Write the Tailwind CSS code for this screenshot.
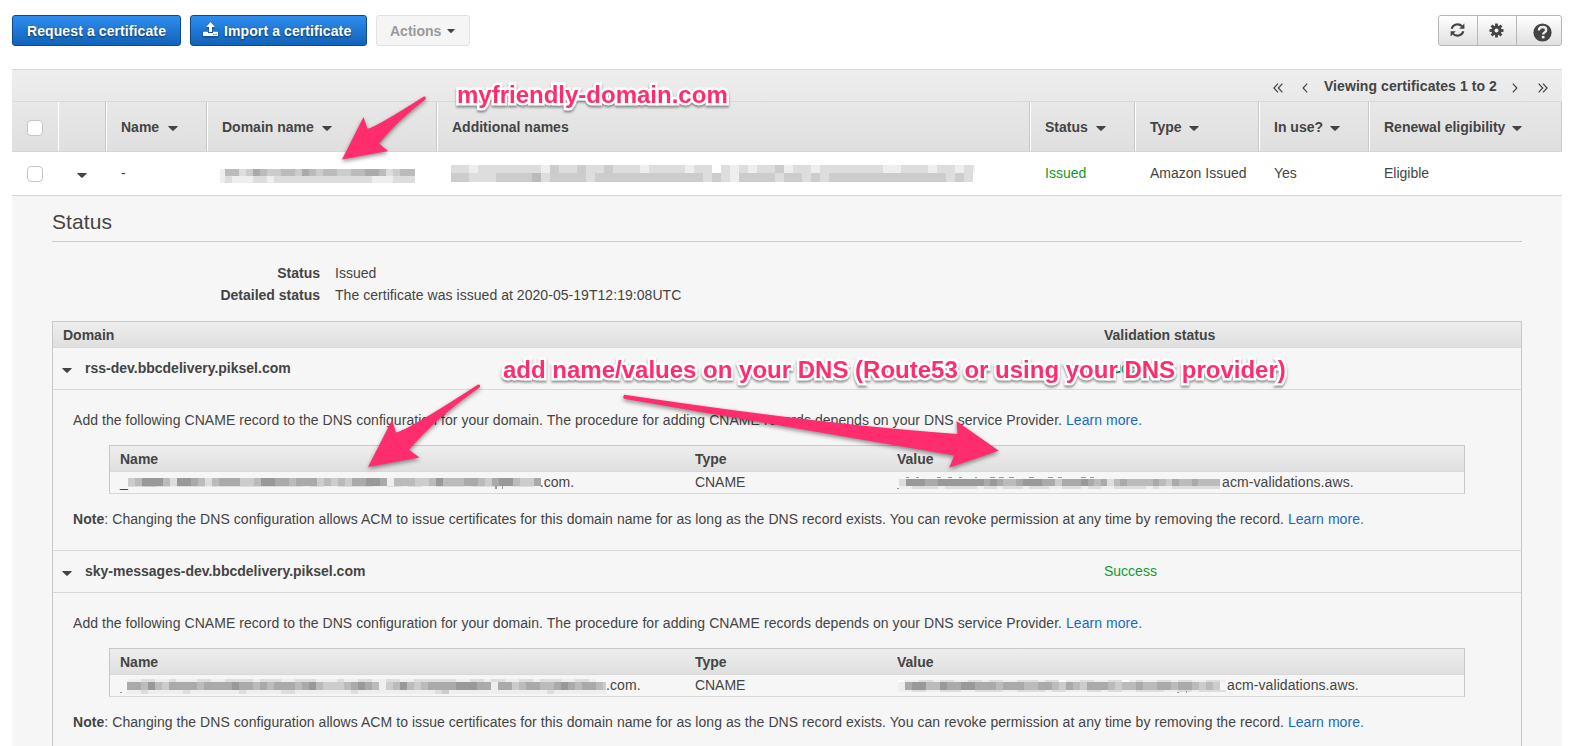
<!DOCTYPE html>
<html lang="en">
<head>
<meta charset="utf-8">
<title>Certificate Manager</title>
<script src="https://cdn.jsdelivr.net/npm/@tailwindcss/browser@4"></script>
</head>
<body class="relative h-[746px] w-[1581px] overflow-hidden bg-white font-['Liberation_Sans',Arial,sans-serif] text-[14px] leading-5 text-[#444]">
<svg class="hidden">
  <symbol id="caret" viewBox="0 0 10 5"><path d="M.6 0h8.8q.6.2.2.7L5.7 4.6q-.7.6-1.4 0L.4.7Q0 .2.6 0z" fill="#444"/></symbol>
</svg>

<header class="flex h-[46px] items-start justify-between pt-[15px] pr-[19px] pl-3 font-bold">
  <div class="flex">
    <button class="h-[31px] w-[169px] rounded-[3px] border border-[#0d4a8c] bg-linear-to-b from-[#2e8def] to-[#1263b8] tracking-[0.1px] text-white [text-shadow:0_1px_2px_rgba(0,0,0,.6)]">Request a certificate</button>
    <button class="ml-[9px] flex h-[31px] w-[177px] items-center rounded-[3px] border border-[#0d4a8c] bg-linear-to-b from-[#2e8def] to-[#1263b8] pl-3 tracking-[0.1px] text-white [text-shadow:0_1px_2px_rgba(0,0,0,.6)]">
      <svg class="mr-[6px] mb-[2px] h-[15px] w-[15px] drop-shadow-[0_1px_1px_rgba(0,0,0,.5)]" viewBox="0 0 15 15" fill="#fff"><path d="M7.5 0 12 5H9v5H6V5H3z"/><path fill-rule="evenodd" d="M.6 9.8H5V11h5V9.8h4.4q.6 0 .6.6v3q0 .6-.6.6H.6q-.6 0-.6-.6v-3q0-.6.6-.6zM10.3 12v1h1v-1zm2.2 0v1h1v-1z"/></svg>
      Import a certificate
    </button>
    <button class="ml-[9px] flex h-[31px] w-[94px] items-center rounded-[3px] border border-[#e2e2e2] bg-[#f5f5f5] pl-[13px] text-[#999]">Actions
      <svg class="ml-[6px] h-1 w-2" preserveAspectRatio="none"><use href="#caret" width="8" height="4"/></svg>
    </button>
  </div>
  <div class="flex h-[31px] w-[124px] rounded-[3px] border border-[#b7b7b7] bg-linear-to-b from-white to-[#e0e0e0]">
    <div class="flex w-[39px] items-center justify-center border-r border-[#b7b7b7] pr-px pb-px">
      <svg class="h-[14px] w-[15px]" viewBox="0 0 15 14"><g fill="none" stroke="#444" stroke-width="2.1"><path d="M1.7 5.8C2.7 1.2 9-.1 12.1 3.4"/><path d="M13.3 8.2C12.3 12.8 6 14.1 2.9 10.6"/></g><path d="M14.4.6v5.2H9.2zM.6 13.4V8.2h5.2z" fill="#444"/></svg>
    </div>
    <div class="flex w-[39px] items-center justify-center border-r border-[#b7b7b7] pr-px pb-px">
      <svg class="h-[15px] w-[15px]" viewBox="-7.5 -7.5 15 15"><g fill="#444"><path d="M-1.4-7h2.8v14h-2.8z"/><path d="M-1.4-7h2.8v14h-2.8z" transform="rotate(45)"/><path d="M-1.4-7h2.8v14h-2.8z" transform="rotate(90)"/><path d="M-1.4-7h2.8v14h-2.8z" transform="rotate(135)"/><circle r="5.1"/></g><circle r="2" fill="#f2f2f2"/></svg>
    </div>
    <div class="flex flex-1 items-center pt-[3px] pl-[16px]">
      <svg class="h-[19px] w-[19px]" viewBox="0 0 19 19"><circle cx="9.5" cy="9.5" r="9.1" fill="#444"/><path d="M5.9 7.4q0-3.4 3.7-3.4 3.6 0 3.6 2.9 0 1.7-1.7 2.6-1.3.7-1.3 1.9" fill="none" stroke="#eee" stroke-width="2.4"/><path d="M8.8 12.9h2.7v2.5H8.8z" fill="#eee"/></svg>
    </div>
  </div>
</header>

<main class="mt-[23px] ml-3 w-[1550px]">
  <div class="bg-linear-to-b from-[#eee] to-[#dfdfdf]">
    <div class="flex h-[33px] items-center justify-end border-t border-b border-[#d9d9d9] pr-[14px] font-bold">
      <svg class="mt-[5px] h-[10px] w-[10px]" viewBox="0 0 10 10" fill="none" stroke="#444" stroke-width="1.2"><path d="M5 .7.9 5 5 9.3M9.4.7 5.3 5l4.1 4.3"/></svg>
      <svg class="mt-[5px] ml-[19px] h-[10px] w-[6px]" viewBox="0 0 6 10" fill="none" stroke="#444" stroke-width="1.2"><path d="M5.2.7 1.1 5l4.1 4.3"/></svg>
      <span class="ml-4 tracking-[0.08px]">Viewing certificates 1 to 2</span>
      <svg class="mt-[5px] ml-[15px] h-[10px] w-[6px]" viewBox="0 0 6 10" fill="none" stroke="#444" stroke-width="1.2"><path d="M.8.7 4.9 5 .8 9.3"/></svg>
      <svg class="mt-[5px] ml-5 h-[10px] w-[10px]" viewBox="0 0 10 10" fill="none" stroke="#444" stroke-width="1.2"><path d="M.6.7 4.7 5 .6 9.3M5 .7 9.1 5 5 9.3"/></svg>
    </div>
    <div class="grid h-[50px] grid-cols-[47px_47px_101px_230px_593px_105px_124px_110px_193px] border-b border-[#d5d5d5] font-bold">
      <div class="flex items-center border-r border-white pl-[15px]"><i class="mt-[3px] h-4 w-4 rounded-[4px] border border-[#c4c4c4] bg-white"></i></div>
      <div class="border-r border-[#c8c8c8]"></div>
      <div class="flex items-center border-r border-l border-r-[#c8c8c8] border-l-white pl-[14px]">Name<svg class="mt-1 ml-[9px] h-[5px] w-[10px]"><use href="#caret"/></svg></div>
      <div class="flex items-center border-r border-l border-r-[#c8c8c8] border-l-white pl-[14px]">Domain name<svg class="mt-1 ml-[8px] h-[5px] w-[10px]"><use href="#caret"/></svg></div>
      <div class="flex items-center border-r border-l border-r-[#c8c8c8] border-l-white pl-[14px]">Additional names</div>
      <div class="flex items-center border-r border-l border-r-[#c8c8c8] border-l-white pl-[14px]">Status<svg class="mt-1 ml-[8px] h-[5px] w-[10px]"><use href="#caret"/></svg></div>
      <div class="flex items-center border-r border-l border-r-[#c8c8c8] border-l-white pl-[14px]">Type<svg class="mt-1 ml-[7px] h-[5px] w-[10px]"><use href="#caret"/></svg></div>
      <div class="flex items-center border-r border-l border-r-[#c8c8c8] border-l-white pl-[14px]">In use?<svg class="mt-1 ml-[7px] h-[5px] w-[10px]"><use href="#caret"/></svg></div>
      <div class="flex items-center border-r border-l border-r-[#c8c8c8] border-l-white pl-[14px]">Renewal eligibility<svg class="mt-1 ml-[7px] h-[5px] w-[10px]"><use href="#caret"/></svg></div>
    </div>
  </div>
  <div class="grid h-[44px] grid-cols-[47px_47px_101px_230px_593px_105px_124px_110px_193px] items-center border-b border-[#d5d5d5]">
    <div class="pl-[15px]"><i class="block h-4 w-4 rounded-[4px] border border-[#c4c4c4] bg-white"></i></div>
    <div class="pl-[18px]"><svg class="mt-[3px] h-[5px] w-[10px]"><use href="#caret"/></svg></div>
    <div class="pb-[2px] pl-[15px]">-</div>
    <div class="pl-[13px]"><svg class="mt-[3px] h-[15px] w-[195px]" data-x="5" data-cell="7" data-rows="1:7:bbdcabccbbcabcbbccbbaabdcbbb 8:7:deeeddeddddddddddddddeeedddd" data-edge="e"></svg></div>
    <div class="pl-[14px]"><svg class="h-[17px] w-[524px]" data-x="0" data-cell="9" data-rows="0:8:ddedddddddecddcddcdddeddddeddfdededdceddedddddddeedddeddede 8:9:ccdddccccbdccccdccccccccccccdcdeccccdccdcdcccccccccccccdcd"></svg></div>
    <div class="pb-[2px] pl-[15px] text-[#109a30]">Issued</div>
    <div class="pb-[2px] pl-[15px]">Amazon Issued</div>
    <div class="pb-[2px] pl-[15px]">Yes</div>
    <div class="pb-[2px] pl-[15px]">Eligible</div>
  </div>

  <section class="h-[551px] bg-[#f6f6f6] px-10">
    <h2 class="h-[46px] border-b border-[#ccc] pt-[12px] text-[21px] leading-7 tracking-[0.1px]">Status</h2>
    <dl class="grid grid-cols-[268px_1fr] gap-x-[15px] pt-[20px] leading-[22px]">
      <dt class="text-right font-bold">Status</dt><dd>Issued</dd>
      <dt class="text-right font-bold">Detailed status</dt><dd class="tracking-[0.045px]">The certificate was issued at 2020-05-19T12:19:08UTC</dd>
    </dl>

    <div class="mt-[15px] h-[440px] border-x border-t border-[#c8c8c8]">
      <div class="grid h-[26px] grid-cols-[1041px_1fr] items-center border-b border-[#d9d9d9] bg-linear-to-b from-[#eee] to-[#dfdfdf] pl-[10px] font-bold">
        <span>Domain</span><span>Validation status</span>
      </div>

      <div class="grid h-[42px] grid-cols-[22px_1019px_1fr] items-center border-b border-[#d9d9d9] pb-px pl-[10px]">
        <svg class="mt-[4px] -ml-px h-[5px] w-[10px]"><use href="#caret"/></svg>
        <b class="-mt-px">rss-dev.bbcdelivery.piksel.com</b>
        <span class="-mt-px text-[#109a30]">Success</span>
      </div>
      <div class="h-[161px] border-b border-[#d9d9d9] px-5 pt-5">
        <p class="tracking-[0.054px]">Add the following CNAME record to the DNS configuration for your domain. The procedure for adding CNAME records depends on your DNS service Provider. <a class="text-[#166ac5]">Learn more.</a></p>
        <div class="mt-[15px] mr-9 ml-9 h-[49px] border border-[#c8c8c8] border-b-[#d9d9d9]">
          <div class="grid h-[26px] grid-cols-[575px_202px_1fr] items-center border-b border-[#d9d9d9] bg-linear-to-b from-[#eee] to-[#dfdfdf] pl-[10px] font-bold">
            <span>Name</span><span>Type</span><span>Value</span>
          </div>
          <div class="grid grid-cols-[575px_202px_1fr] pl-[10px] leading-[21px]">
            <div class="flex">_<svg class="mt-[6px] -mr-px h-[12px] w-[413px]" data-x="0" data-cell="7" data-rows="0:8:cb999bd99abdbaaaccb99aabaaacbcbcaa99aebbbccb9bbbaabca99bccaab 8:1:ddccddeddddedddddddddddddeddeedddddeeddeddeeddddeddddeeddd" data-marks="367,8,2,3 374,8,1,3"></svg>.com.</div>
            <span class="tracking-[-0.05px]">CNAME</span>
            <div class="flex tracking-[0.09px]"><svg class="mt-[4px] mr-[2px] h-[14px] w-[323px]" data-x="2" data-cell="6.5" data-rows="3:7:d999aa9999999a9abba999aacaaa9abadbabbbbabcabbabbbb 10:3:eeddddedddddeddedddedddeedddeddeedddddedeedddddddd" data-marks="0,12,2,1 9,1,3,1 19,1,3,1 40,1,4,1 51,1,4,1 62,1,3,1 78,1,2,1 93,1,5,1 102,1,5,1 112,1,5,1 132,1,5,1 151,1,5,1 161,1,4,1 184,1,5,1 193,1,4,1"></svg>acm-validations.aws.</div>
          </div>
        </div>
        <p class="mt-[15px] tracking-[0.054px]"><b>Note</b>: Changing the DNS configuration allows ACM to issue certificates for this domain name for as long as the DNS record exists. You can revoke permission at any time by removing the record. <a class="text-[#166ac5]">Learn more.</a></p>
      </div>

      <div class="grid h-[42px] grid-cols-[22px_1019px_1fr] items-center border-b border-[#d9d9d9] pb-px pl-[10px]">
        <svg class="mt-[4px] -ml-px h-[5px] w-[10px]"><use href="#caret"/></svg>
        <b class="-mt-px">sky-messages-dev.bbcdelivery.piksel.com</b>
        <span class="-mt-px text-[#109a30]">Success</span>
      </div>
      <div class="h-[161px] px-5 pt-5">
        <p class="tracking-[0.054px]">Add the following CNAME record to the DNS configuration for your domain. The procedure for adding CNAME records depends on your DNS service Provider. <a class="text-[#166ac5]">Learn more.</a></p>
        <div class="mt-[15px] mr-9 ml-9 h-[49px] border border-[#c8c8c8] border-b-[#d9d9d9]">
          <div class="grid h-[26px] grid-cols-[575px_202px_1fr] items-center border-b border-[#d9d9d9] bg-linear-to-b from-[#eee] to-[#dfdfdf] pl-[10px] font-bold">
            <span>Name</span><span>Type</span><span>Value</span>
          </div>
          <div class="grid grid-cols-[575px_202px_1fr] pl-[10px] leading-[21px]">
            <div class="flex tracking-[0.1px]"><svg class="mt-[4px] h-[15px] w-[486px]" data-x="7" data-cell="7" data-rows="0:3:eeddeedeeeddeeddddedddeedddeeedeeddeeddeeddddddeeddeddeeddedddeedde 3:8:aab9bcaaaabaaaa9aababaaaba9bcccba9abecb9bcbaaaa999aaeaacbaabba9abaabcba9aa 11:4:eedeeeeedeeeeeeedeeeeeddeeeeeeeedeeeeeeeeeeedceeeeeeeeeeeeeedeeeeeeee" data-marks="0,13,2,1"></svg>.com.</div>
            <span class="tracking-[-0.05px]">CNAME</span>
            <div class="flex tracking-[0.09px]"><svg class="mt-[4px] mr-px h-[14px] w-[329px]" data-x="1" data-cell="7" data-rows="1:2:feeddeddeeddeddeedddeddfeeddeeddfedeeddeddeedde 3:8:ea99bb9aa99aaabaaabbaabcabcaaabcbbabbaabaabcbc 11:2:eeddeedddeeddddeeddddeddeeeddeddeeddddeeddedddd" data-marks="280,13,2,1 289,12,1,2"></svg>acm-validations.aws.</div>
          </div>
        </div>
        <p class="mt-[15px] tracking-[0.054px]"><b>Note</b>: Changing the DNS configuration allows ACM to issue certificates for this domain name for as long as the DNS record exists. You can revoke permission at any time by removing the record. <a class="text-[#166ac5]">Learn more.</a></p>
      </div>
    </div>
  </section>
</main>

<!-- Annotations drawn over the console -->
<svg class="pointer-events-none absolute inset-0 h-[746px] w-[1581px] drop-shadow-[0_2px_2px_rgba(0,0,0,.45)]" viewBox="0 0 1581 746" fill="#ff2d6d">
  <path d="M423.5 96.7q2-.7 2.300 1.300 0 1-.8 1.700Q398 120 379 143.500l9 7.500-46 8.500L363.500 117l4 11.800Q376 127 423.500 96.700z"/>
  <path d="M477.700 384.700q2-.7 2.500 1.200 0 1-.9 1.800Q437 417 409 449.800l10.500 7.700-51.500 9.500L392 420l4 12.500Q408 430 477.700 384.700z"/>
  <path d="M624.500 394.700Q820 424 957.500 434l-1.100-13 42.400 29.700-49.500 16.800 5-12L625 399q-2.500-1-1.500-3.200z"/>
</svg>
<div class="absolute top-[81px] left-[457px] text-[24px] leading-7 font-bold whitespace-nowrap text-[#ff2d6d] drop-shadow-[0_2px_1px_rgba(0,0,0,.4)] [-webkit-text-stroke:5px_white] [paint-order:stroke_fill] [stroke-linejoin:round]">myfriendly-domain.com</div>
<div class="absolute top-[356px] left-[503px] text-[24px] leading-7 font-bold whitespace-nowrap text-[#ff2d6d] drop-shadow-[0_2px_1px_rgba(0,0,0,.4)] [-webkit-text-stroke:5px_white] [paint-order:stroke_fill] [stroke-linejoin:round]">add name/values on your DNS (Route53 or using your DNS provider)</div>

<script>
// Pixelated redactions: each row is "top:height:shades", one hex grey per cell.
document.querySelectorAll('svg[data-rows]').forEach(function (svg) {
  var x0 = +svg.dataset.x, cell = +svg.dataset.cell;
  function rect(x, y, w, h, fill) {
    var r = document.createElementNS('http://www.w3.org/2000/svg', 'rect');
    r.setAttribute('x', x); r.setAttribute('y', y);
    r.setAttribute('width', w); r.setAttribute('height', h);
    r.setAttribute('fill', fill);
    r.setAttribute('shape-rendering', 'crispEdges');
    svg.appendChild(r);
  }
  svg.dataset.rows.split(' ').forEach(function (row) {
    var p = row.split(':');
    if (svg.dataset.edge) rect(0, +p[0], x0, +p[1], '#' + svg.dataset.edge.repeat(3));
    p[2].split('').forEach(function (c, i) {
      rect(x0 + i * cell, +p[0], cell, +p[1], '#' + c.repeat(3));
    });
  });
  (svg.dataset.marks || '').split(' ').filter(Boolean).forEach(function (m) {
    var v = m.split(',');
    rect(v[0], v[1], v[2], v[3], '#999');
  });
});
</script>
</body>
</html>
